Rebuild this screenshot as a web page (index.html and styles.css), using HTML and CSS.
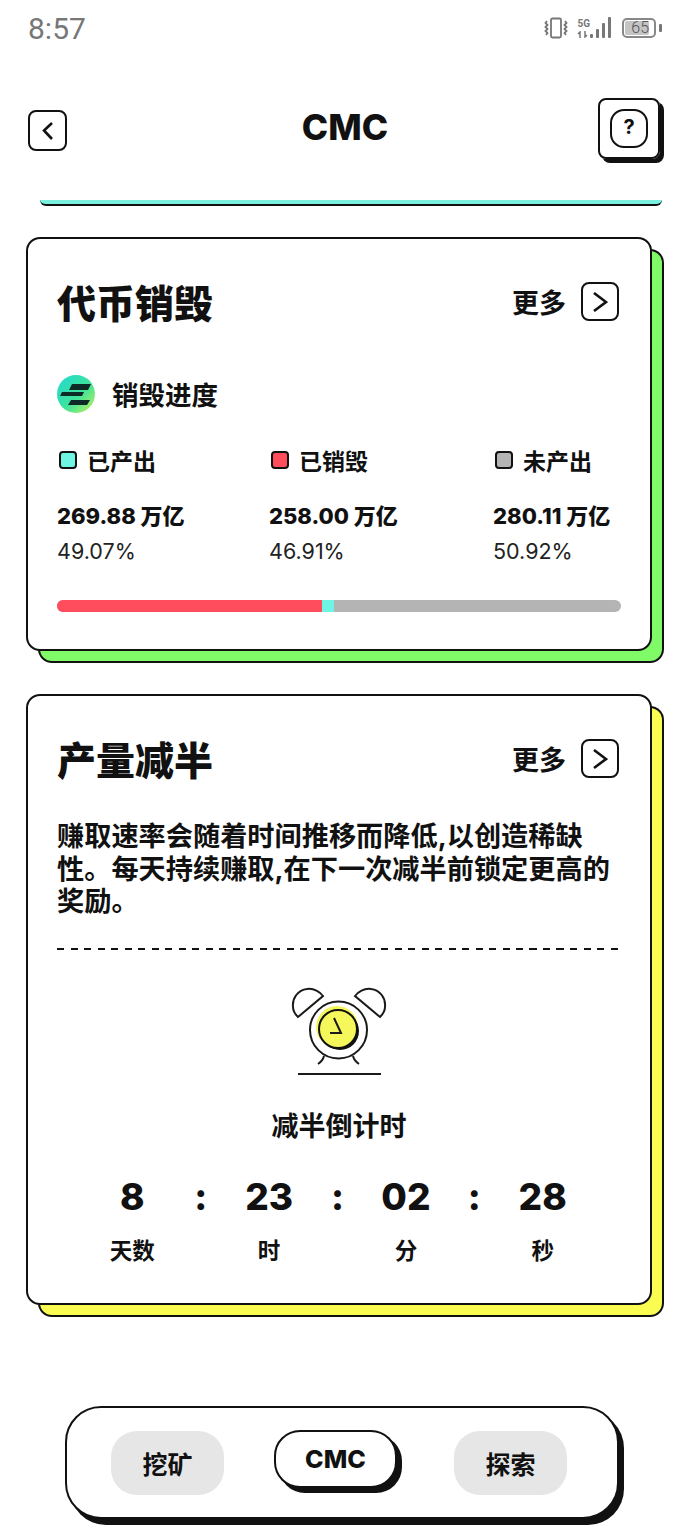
FILE: index.html
```html
<!DOCTYPE html>
<html lang="zh-CN">
<head>
    <meta charset="UTF-8">
    <meta name="viewport" content="width=device-width, initial-scale=1.0">
    <title>CMC</title>
    <link rel="stylesheet" href="styles.css">
</head>

<body>
    <div class="status-bar">
        <span class="time">8:57</span>
        <div class="status-icons">
            <svg width="24" height="22" viewBox="0 0 24 22" fill="none" stroke="#777" stroke-width="1.8">
                <rect x="7" y="1.5" width="10" height="19" rx="1.5"/>
                <path d="M3 4 1.5 6 3.5 8 1.5 10 3.5 12 1.5 14 3.5 16 2 18M21 4l1.5 2-2 2 2 2-2 2 2 2-2 2 1.5 2"/>
            </svg>
            <div class="net">
                <span class="net-top">5G</span>
                <svg width="12" height="7" viewBox="0 0 12 7" fill="none" stroke="#777" stroke-width="1.5">
                    <path d="M3 7V1L1 3M8 0V6L10 4"/>
                </svg>
            </div>
            <svg class="signal" width="21" height="24" viewBox="0 0 21 24" fill="#777">
                <rect x="0" y="18" width="3" height="4" rx="1"/>
                <rect x="6" y="13" width="3" height="9" rx="1"/>
                <rect x="12" y="7" width="3" height="15" rx="1"/>
                <rect x="18" y="1" width="3" height="21" rx="1"/>
            </svg>
            <div class="battery"><span class="battery-level">65</span></div>
            <span class="battery-cap"></span>
        </div>
    </div>

    <header class="top-bar">
        <a class="icon-box back-btn">
            <svg width="16" height="22" viewBox="0 0 16 22" fill="none" stroke="#111" stroke-width="2.6">
                <path d="M12 3 4 10.5 12 19"/>
            </svg>
        </a>
        <h1>CMC</h1>
        <a class="help-btn">
            <span class="help-inner">?</span>
        </a>
    </header>

    <div class="peek"></div>

    <section class="card card-green">
        <div class="card-head">
            <h2>代币销毁</h2>
            <a class="more">更多
                <span class="icon-box more-icon">
                    <svg width="16" height="20" viewBox="0 0 16 20" fill="none" stroke="#111" stroke-width="2.6">
                        <path d="M2 1 14 10 2 19"/>
                    </svg>
                </span>
            </a>
        </div>

        <div class="sub-head">
            <svg width="38" height="38" viewBox="0 0 38 38">
                <defs>
                    <linearGradient id="logoFill" x1="0" y1="0" x2="1" y2="1">
                        <stop offset="0" stop-color="#1fd8d4"/>
                        <stop offset="0.55" stop-color="#3fe39a"/>
                        <stop offset="1" stop-color="#c4f25a"/>
                    </linearGradient>
                </defs>
                <circle cx="19" cy="19" r="19" fill="url(#logoFill)"/>
                <path d="M15 9H34L31 15H12ZM5 17H27L25 21H3ZM14 25H33L30 30H11Z" fill="#0d2a26"/>
            </svg>
            <span>销毁进度</span>
        </div>

        <div class="stats">
            <div class="stat">
                <div class="legend"><i class="swatch swatch-teal"></i>已产出</div>
                <div class="value">269.88 万亿</div>
                <div class="pct">49.07%</div>
            </div>
            <div class="stat">
                <div class="legend"><i class="swatch swatch-red"></i>已销毁</div>
                <div class="value">258.00 万亿</div>
                <div class="pct">46.91%</div>
            </div>
            <div class="stat">
                <div class="legend"><i class="swatch swatch-gray"></i>未产出</div>
                <div class="value">280.11 万亿</div>
                <div class="pct">50.92%</div>
            </div>
        </div>

        <div class="progress">
            <span class="bar-red"></span>
            <span class="bar-teal"></span>
        </div>
    </section>

    <section class="card card-yellow">
        <div class="card-head">
            <h2>产量减半</h2>
            <a class="more">更多
                <span class="icon-box more-icon">
                    <svg width="16" height="20" viewBox="0 0 16 20" fill="none" stroke="#111" stroke-width="2.6">
                        <path d="M2 1 14 10 2 19"/>
                    </svg>
                </span>
            </a>
        </div>

        <p class="intro">赚取速率会随着时间推移而降低,以创造稀缺<br>性。每天持续赚取,在下一次减半前锁定更高的奖励。</p>

        <div class="dashed"></div>

        <svg class="clock" width="100" height="90" viewBox="0 0 100 90" fill="none" stroke="#1a1a1a" stroke-width="2">
            <path d="M18 2C9 3 3 11 4 20c0 3 2 7 5 10L34 9C31 5 25 1 18 2Z"/>
            <path d="M82 2c9 1 15 9 14 18 0 3-2 7-5 10L66 9c3-4 9-8 16-7Z"/>
            <circle cx="49.5" cy="43" r="28.5"/>
            <circle cx="48" cy="40" r="21" fill="#f6f75a" stroke="none"/>
            <circle cx="51" cy="44" r="19" fill="#111" stroke="none"/>
            <circle cx="49" cy="42" r="19" fill="#f6f75a" stroke="#111"/>
            <path d="M45 31 52 46H41"/>
            <path d="M35 69c-1 4-3 6-6 8M64 69c1 4 3 6 6 8"/>
            <path d="M9 87H92"/>
        </svg>

        <div class="countdown-title">减半倒计时</div>

        <div class="countdown">
            <span class="num">8</span>
            <span class="num">:</span>
            <span class="num">23</span>
            <span class="num">:</span>
            <span class="num">02</span>
            <span class="num">:</span>
            <span class="num">28</span>
            <span class="unit">天数</span>
            <span class="unit unit-2">时</span>
            <span class="unit unit-3">分</span>
            <span class="unit unit-4">秒</span>
        </div>
    </section>

    <nav class="bottom-nav">
        <a class="nav-btn">挖矿</a>
        <a class="nav-btn nav-active">CMC</a>
        <a class="nav-btn">探索</a>
    </nav>
</body>
</html>
```

FILE: styles.css
```css
* {
    margin: 0;
    padding: 0;
    box-sizing: border-box;
}

body {
    font-family: "Inter", "Noto Sans CJK SC", sans-serif;
    background-color: #ffffff;
    color: #111111;
    width: 690px;
    height: 1525px;
    overflow: hidden;
}

.status-bar {
    display: flex;
    justify-content: space-between;
    align-items: center;
    height: 56px;
    padding: 0 28px;
    color: #777777;
}

.time {
    font-family: "Roboto", sans-serif;
    font-size: 30px;
}

.status-icons {
    display: flex;
    align-items: center;
    gap: 3px;
}

.net {
    display: flex;
    flex-direction: column;
    gap: 2px;
    font-family: "Roboto", sans-serif;
    font-weight: 700;
    font-size: 10px;
    line-height: 11px;
    margin-left: 6px;
}

.signal {
    margin-left: -3px;
}

.battery {
    width: 34px;
    height: 20px;
    margin-left: 8px;
    border: 2px solid #888888;
    border-radius: 5px;
    padding: 1px;
}

.battery-level {
    display: block;
    height: 100%;
    width: 86%;
    background-color: #c4c4c4;
    border-radius: 2px;
    font-family: "Roboto", sans-serif;
    font-size: 16px;
    font-weight: 300;
    line-height: 14px;
    text-align: right;
    color: #555555;
}

.battery-cap {
    width: 3px;
    height: 8px;
    background-color: #777777;
    border-radius: 1px;
}

.top-bar {
    display: grid;
    grid-template-columns: 1fr auto 1fr;
    align-items: center;
    height: 65px;
    margin-top: 42px;
    padding: 0 26px 0 28px;
}

.top-bar h1 {
    font-size: 35.5px;
    font-weight: 800;
    line-height: 1;
    margin-top: -6px;
    padding-right: 2px;
}

.icon-box {
    display: flex;
    align-items: center;
    justify-content: center;
    border: 2.5px solid #111111;
    border-radius: 8px;
    background-color: #ffffff;
}

.back-btn {
    width: 39px;
    height: 41px;
}

.help-btn {
    display: flex;
    align-items: center;
    justify-content: center;
    justify-self: end;
    width: 62px;
    height: 61px;
    border: 2px solid #111111;
    border-radius: 8px;
    box-shadow: 4px 4px 0 #111111;
    margin-top: -4px;
    margin-right: 4px;
}

.help-inner {
    width: 38px;
    height: 39px;
    border: 2.5px solid #111111;
    border-radius: 14px;
    text-align: center;
    font-size: 20px;
    font-weight: 700;
    line-height: 33px;
}

.peek {
    width: 622px;
    height: 6px;
    margin: 37px 0 0 40px;
    background-color: #7af0df;
    border-bottom: 2px solid #111111;
    border-radius: 0 0 10px 10px;
}

.card {
    width: 626px;
    margin-left: 26px;
    padding: 43px 29px 0;
    background-color: #ffffff;
    border: 2px solid #111111;
    border-radius: 14px;
}

.card-green {
    height: 414px;
    margin-top: 31px;
    box-shadow: 12px 12px 0 -2px #80fa66, 12px 12px 0 0 #111111;
}

.card-yellow {
    height: 611px;
    margin-top: 43px;
    box-shadow: 12px 12px 0 -2px #fafc52, 12px 12px 0 0 #111111;
}

.card-head {
    display: flex;
    justify-content: space-between;
    align-items: center;
    height: 39px;
}

.card-head h2 {
    padding-top: 4px;
    font-size: 39px;
    font-weight: 900;
    line-height: 1;
}

.more {
    display: flex;
    align-items: center;
    gap: 15px;
    margin-right: 2px;
    font-size: 27px;
    font-weight: 700;
}

.more-icon {
    width: 38px;
    height: 39px;
}

.sub-head {
    display: flex;
    align-items: center;
    gap: 17px;
    margin-top: 53px;
    font-size: 26.5px;
    font-weight: 700;
}

.stats {
    display: grid;
    grid-template-columns: 212px 224px 1fr;
    margin-top: 31px;
}

.legend {
    display: flex;
    align-items: center;
    height: 32px;
    font-size: 23px;
    font-weight: 700;
}

.swatch {
    width: 18px;
    height: 18px;
    margin: 0 10px 0 2px;
    border: 2px solid #111111;
    border-radius: 4px;
}

.swatch-teal {
    background-color: #6ff5e4;
}

.swatch-red {
    background-color: #ff4d5e;
}

.swatch-gray {
    background-color: #b4b4b4;
}

.value {
    margin-top: 24px;
    font-size: 22px;
    font-weight: 800;
    line-height: 32px;
}

.pct {
    margin-top: 3px;
    font-size: 21.5px;
    line-height: 32px;
    color: #222222;
}

.progress {
    display: flex;
    height: 12px;
    margin-top: 33px;
    background-color: #b4b4b4;
    border-radius: 6px;
    overflow: hidden;
}

.bar-red {
    width: 265px;
    background-color: #ff4d5e;
}

.bar-teal {
    width: 12px;
    background-color: #6ff5e4;
}

.intro {
    margin-top: 43px;
    font-size: 27.2px;
    font-weight: 700;
    line-height: 32.5px;
}

.dashed {
    height: 2px;
    margin-top: 29.5px;
    background-image: repeating-linear-gradient(to right, #111111 0, #111111 7px, transparent 7px, transparent 13.5px);
}

.clock {
    display: block;
    margin: 37px auto 0;
}

.countdown-title {
    margin-top: 30px;
    text-align: center;
    font-size: 27px;
    font-weight: 700;
    line-height: 40px;
}

.countdown {
    display: grid;
    grid-template-columns: repeat(7, 68.4px);
    justify-content: center;
    margin-top: 27px;
    padding-right: 3px;
    text-align: center;
}

.num {
    font-size: 37px;
    font-weight: 800;
    line-height: 46px;
}

.unit {
    grid-column: 1;
    grid-row: 2;
    margin-top: 16px;
    font-size: 22.5px;
    font-weight: 700;
    line-height: 30px;
}

.unit-2 {
    grid-column: 3;
}

.unit-3 {
    grid-column: 5;
}

.unit-4 {
    grid-column: 7;
}

.bottom-nav {
    display: flex;
    align-items: flex-start;
    width: 554px;
    height: 113px;
    margin: 101px 0 0 65px;
    padding: 23px 0 0 44px;
    background-color: #ffffff;
    border: 2px solid #111111;
    border-radius: 36px;
    box-shadow: 5px 6px 0 #111111;
}

.nav-btn {
    display: flex;
    align-items: center;
    justify-content: center;
    width: 113px;
    height: 64px;
    background-color: #e6e6e6;
    border-radius: 26px;
    font-size: 25px;
    font-weight: 700;
}

.nav-active {
    width: 123px;
    height: 58px;
    margin: -1px 57px 0 50px;
    background-color: #ffffff;
    border: 2px solid #111111;
    box-shadow: 5px 5px 0 #111111;
    font-size: 25px;
    font-weight: 800;
}
```
